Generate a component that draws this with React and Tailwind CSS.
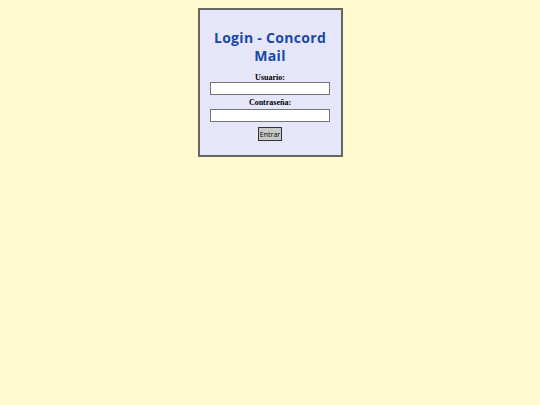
import React from "react";

export default function App() {
    return (
        <div className="min-h-[405px] w-full bg-[#fffacd] pt-2">
            <div className="mx-auto w-[145px] border-2 border-[#666666] bg-[#e6e6fa] px-[11px] pt-[19px] pb-[14px]">
                <h1 className="text-center font-['Comic_Sans_MS','Open_Sans',sans-serif] text-[14px] font-bold leading-[18px] tracking-[0.3px] text-[#1a48a6]">
                    Login - Concord Mail
                </h1>

                <form className="mt-[8px] flex flex-col items-center">
                    <label className="font-['Liberation_Serif',serif] text-[8px] font-bold leading-[9px] text-black">
                        Usuario:
                    </label>
                    <input
                        type="text"
                        className="h-[13px] w-[120px] border border-[#767676] bg-white"
                    />

                    <label className="mt-[3px] font-['Liberation_Serif',serif] text-[8px] font-bold leading-[9px] text-black">
                        Contraseña:
                    </label>
                    <input
                        type="password"
                        className="mt-[2px] h-[13px] w-[120px] border border-[#767676] bg-white"
                    />

                    <button
                        type="button"
                        className="mt-[5px] h-[14px] w-[24px] border border-[#333333] bg-[#c8c8c8] font-['Comic_Sans_MS','Open_Sans',sans-serif] text-[7px] leading-none text-black"
                    >
                        Entrar
                    </button>
                </form>
            </div>
        </div>
    );
}
